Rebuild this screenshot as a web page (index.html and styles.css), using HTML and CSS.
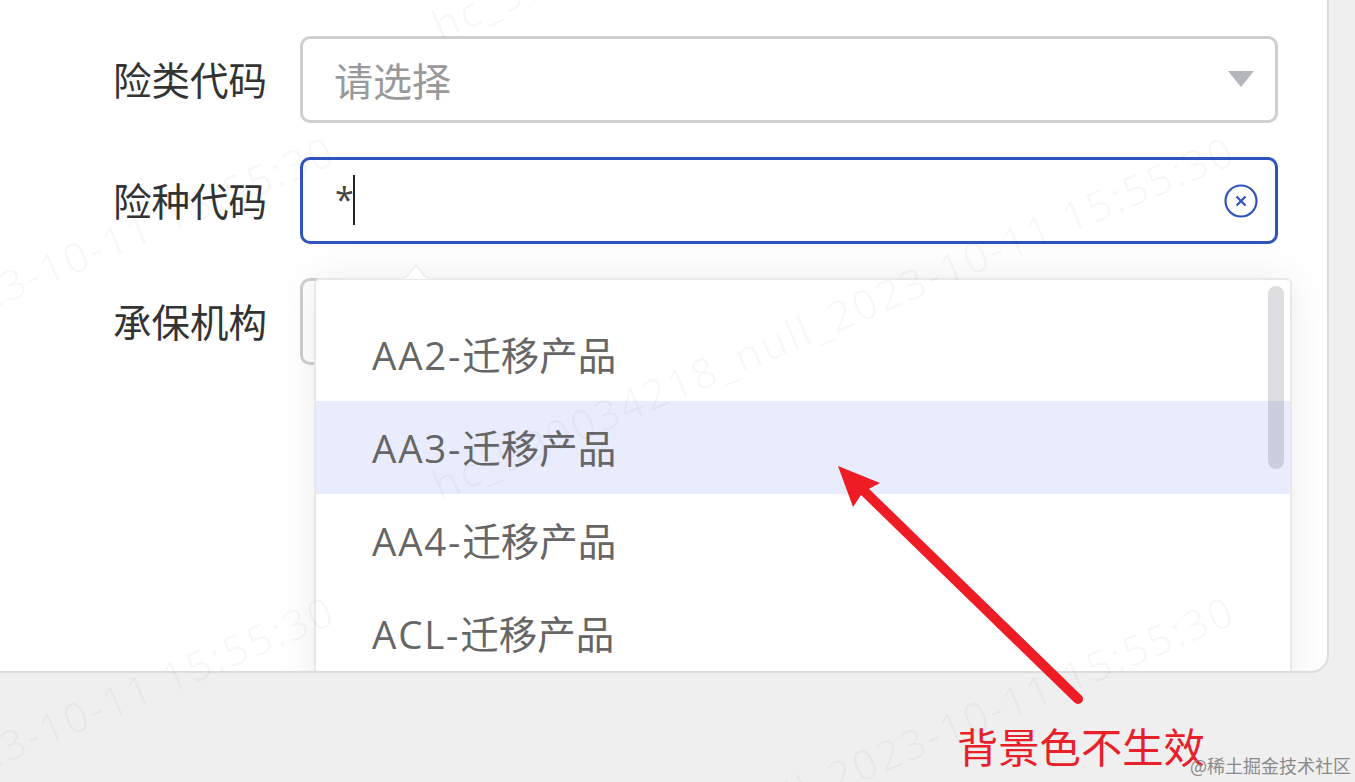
FILE: index.html
```html
<!DOCTYPE html>
<html lang="zh-CN">
<head>
<meta charset="utf-8">
<title>险种代码</title>
<link rel="stylesheet" href="styles.css">
</head>
<body>
<main class="card">
  <form class="form">
    <div class="row">
      <span class="label">险类代码</span>
      <div class="field">
        <span class="placeholder">请选择</span>
        <svg class="caret" viewBox="0 0 26 16"><path d="M0 0H26L13 16Z"/></svg>
      </div>
    </div>
    <div class="row">
      <span class="label">险种代码</span>
      <div class="field field-active">
        <span class="value">*</span><span class="cursor"></span>
        <svg class="clear" viewBox="0 0 34 34"><circle cx="17" cy="17" r="15.5"/><path d="M12.5 12.5L21.5 21.5M21.5 12.5L12.5 21.5"/></svg>
      </div>
    </div>
    <div class="row">
      <span class="label">承保机构</span>
      <div class="field"></div>
    </div>
  </form>
  <div class="dropdown">
    <svg class="pointer" viewBox="0 0 40 16"><path d="M0 15C8 15 10 14 14 9L20 1L26 9C30 14 32 15 40 15"/></svg>
    <ul class="options">
      <li class="option"><span class="code">AA2-</span>迁移产品</li>
      <li class="option option-hover"><span class="code">AA3-</span>迁移产品</li>
      <li class="option"><span class="code">AA4-</span>迁移产品</li>
      <li class="option"><span class="code">ACL-</span>迁移产品</li>
      <li class="option"><span class="code">ACM-</span>迁移产品</li>
    </ul>
    <div class="scrollbar"></div>
  </div>
</main>
<div class="watermarks" aria-hidden="true">
  <span class="wm wm-1">hc_990034218_null_2023-10-11 15:55:30</span>
  <span class="wm wm-2">hc_990034218_null_2023-10-11 15:55:30</span>
  <span class="wm wm-3">hc_990034218_null_2023-10-11 15:55:30</span>
  <span class="wm wm-4">hc_990034218_null_2023-10-11 15:55:30</span>
  <span class="wm wm-5">hc_990034218_null_2023-10-11 15:55:30</span>
</div>
<svg class="arrow" viewBox="0 0 1355 782"><path class="arrow-shaft" d="M1078 699L862 489"/><path class="arrow-head" d="M838 466L880 483L863 492L853 507Z"/></svg>
<span class="note">背景色不生效</span>
<span class="credit">@稀土掘金技术社区</span>
</body>
</html>
```
FILE: styles.css
```css
* { box-sizing: border-box; }
html, body { margin: 0; height: 100%; }
body {
  position: relative;
  width: 1355px;
  height: 782px;
  overflow: hidden;
  background: #efefef;
  font-family: "Noto Sans CJK SC", "Open Sans", sans-serif;
}
.card {
  position: relative;
  width: 1329px;
  height: 673px;
  overflow: hidden;
  background: #fff;
  border-right: 2px solid #dcdcdc;
  border-bottom: 2px solid #dcdcdc;
  border-bottom-right-radius: 18px;
}
.form {
  display: flex;
  flex-direction: column;
  gap: 34px;
  padding: 36px 0 0 113px;
}
.row {
  display: flex;
  align-items: center;
  gap: 33px;
}
.label {
  width: 154px;
  height: 87px;
  font-size: 38.5px;
  line-height: 84px;
  color: #333;
  white-space: nowrap;
}
.field {
  position: relative;
  display: flex;
  align-items: center;
  width: 978px;
  height: 87px;
  padding-left: 31px;
  background: #fff;
  border: 3px solid #cfcfcf;
  border-radius: 10px;
  font-size: 39px;
}
.field-active { border-color: #2f53bd; }
.placeholder { padding-bottom: 2px; color: #999; }
.value {
  padding: 0 0 3px 1px;
  font-size: 34px;
  color: #444;
  font-family: "Open Sans", sans-serif;
}
.cursor {
  width: 2px;
  height: 50px;
  margin: 0 0 2px -1px;
  background: #222;
}
.caret {
  position: absolute;
  right: 21px;
  top: 32px;
  width: 26px;
  height: 16px;
  fill: #b5b5bd;
}
.clear {
  position: absolute;
  right: 17px;
  top: 24px;
  width: 34px;
  height: 34px;
  fill: none;
  stroke: #2f53bd;
  stroke-width: 2.2;
}
.dropdown {
  position: absolute;
  left: 314px;
  top: 278px;
  width: 978px;
  height: 520px;
  background: #fff;
  border: 2px solid #e8e8e8;
  border-radius: 6px;
  box-shadow: 0 0 40px rgba(0, 0, 0, 0.08);
}
.pointer {
  position: absolute;
  left: 80px;
  top: -16px;
  width: 40px;
  height: 16px;
  fill: #fff;
  stroke: #ececec;
  stroke-width: 1.5;
}
.options {
  margin: 0;
  padding: 27.5px 0 0;
  list-style: none;
}
.option {
  height: 93px;
  padding-left: 56px;
  font-size: 38.5px;
  line-height: 91px;
  color: #666;
  white-space: nowrap;
}
.option-hover { background: #e8ecfc; }
.code { font-family: "Open Sans", sans-serif; letter-spacing: 1.8px; }
.scrollbar {
  position: absolute;
  right: 6px;
  top: 6px;
  width: 16px;
  height: 183px;
  border-radius: 8px;
  background: rgba(100, 100, 110, 0.22);
}
.watermarks {
  position: absolute;
  inset: 0;
  overflow: hidden;
  pointer-events: none;
}
.wm {
  position: absolute;
  font-family: "Open Sans", sans-serif;
  font-size: 42px;
  line-height: 1;
  letter-spacing: 2.2px;
  color: rgba(0, 0, 0, 0.03);
  white-space: nowrap;
  transform: rotate(-23deg);
  transform-origin: 0 100%;
}
.wm-1 { left: 442px; top: 464px; }
.wm-2 { left: -458px; top: 464px; }
.wm-3 { left: 442px; top: 924px; }
.wm-4 { left: -458px; top: 924px; }
.wm-5 { left: 442px; top: 4px; }
.arrow {
  position: absolute;
  inset: 0;
  width: 1355px;
  height: 782px;
  pointer-events: none;
}
.arrow-shaft {
  fill: none;
  stroke: #ee1c25;
  stroke-width: 10;
  stroke-linecap: round;
}
.arrow-head { fill: #ee1c25; }
.note {
  position: absolute;
  left: 957px;
  top: 715px;
  font-size: 41.3px;
  line-height: 60px;
  color: #e8202a;
  white-space: nowrap;
}
.credit {
  position: absolute;
  left: 1190px;
  top: 752px;
  font-size: 18px;
  line-height: 26px;
  color: #8a8a8a;
  white-space: nowrap;
}
```
